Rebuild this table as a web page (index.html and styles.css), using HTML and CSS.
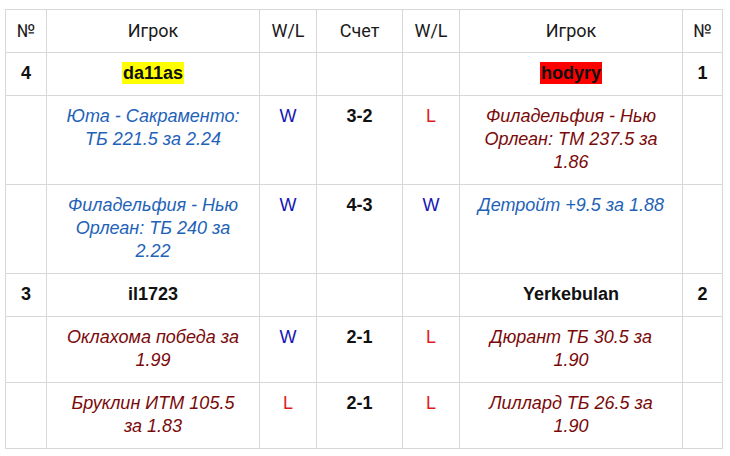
FILE: index.html
```html
<!DOCTYPE html>
<html lang="ru">
<head>
<meta charset="utf-8">
<title>Игроки</title>
<link rel="stylesheet" href="styles.css">
</head>
<body>
<table class="grid">
  <colgroup>
    <col class="c-num"><col class="c-player"><col class="c-wl"><col class="c-score"><col class="c-wl"><col class="c-player2"><col class="c-num2">
  </colgroup>
  <thead>
    <tr>
      <th>№</th><th>Игрок</th><th>W/L</th><th>Счет</th><th>W/L</th><th>Игрок</th><th>№</th>
    </tr>
  </thead>
  <tbody>
    <tr class="player-row">
      <td class="num">4</td>
      <td class="name"><span class="hl-yellow">da11as</span></td>
      <td></td><td></td><td></td>
      <td class="name"><span class="hl-red">hodyry</span></td>
      <td class="num">1</td>
    </tr>
    <tr>
      <td></td>
      <td class="bet blue">Юта - Сакраменто: ТБ 221.5 за 2.24</td>
      <td class="win">W</td>
      <td class="score">3-2</td>
      <td class="loss">L</td>
      <td class="bet red">Филадельфия - Нью Орлеан: ТМ 237.5 за 1.86</td>
      <td></td>
    </tr>
    <tr>
      <td></td>
      <td class="bet blue">Филадельфия - Нью Орлеан: ТБ 240 за 2.22</td>
      <td class="win">W</td>
      <td class="score">4-3</td>
      <td class="win">W</td>
      <td class="bet blue">Детройт +9.5 за 1.88</td>
      <td></td>
    </tr>
    <tr class="player-row">
      <td class="num">3</td>
      <td class="name">il1723</td>
      <td></td><td></td><td></td>
      <td class="name">Yerkebulan</td>
      <td class="num">2</td>
    </tr>
    <tr>
      <td></td>
      <td class="bet red">Оклахома победа за 1.99</td>
      <td class="win">W</td>
      <td class="score">2-1</td>
      <td class="loss">L</td>
      <td class="bet red">Дюрант ТБ 30.5 за 1.90</td>
      <td></td>
    </tr>
    <tr>
      <td></td>
      <td class="bet red">Бруклин ИТМ 105.5 за&nbsp;1.83</td>
      <td class="loss">L</td>
      <td class="score">2-1</td>
      <td class="loss">L</td>
      <td class="bet red">Лиллард ТБ 26.5 за 1.90</td>
      <td></td>
    </tr>
  </tbody>
</table>
</body>
</html>
```
FILE: styles.css
```css
html, body {
  margin: 0;
  padding: 0;
  background: #ffffff;
}

body {
  font-family: "Liberation Sans", Arial, sans-serif;
  font-size: 18px;
  color: #111111;
}

.grid {
  margin: 9px 0 0 5px;
  width: 718px;
  border-collapse: collapse;
  table-layout: fixed;
}

.c-num { width: 41px; }
.c-player { width: 213px; }
.c-wl { width: 57px; }
.c-score { width: 86px; }
.c-player2 { width: 223px; }
.c-num2 { width: 40px; }

.grid th,
.grid td {
  border: 1px solid #d8d8d8;
  padding: 9px 10px 10px;
  line-height: 23px;
  text-align: center;
  vertical-align: top;
}

.grid th {
  font-family: Roboto, "Liberation Sans", sans-serif;
  font-weight: 400;
  font-size: 18px;
  color: #1a1a1a;
  padding-left: 2px;
  padding-right: 2px;
}

.num,
.name,
.score {
  font-weight: 700;
  color: #111111;
}

.hl-yellow {
  background: #ffff00;
  padding: 1px 1px;
}

.hl-red {
  background: #ff0000;
  padding: 1px 1px;
}

.bet {
  font-style: italic;
}

.blue { color: #1f63b8; }
.red { color: #7a0a0a; }

.win { color: #1616b4; }
.loss { color: #e01b1b; }

.grid td.win,
.grid td.loss {
  padding-left: 2px;
  padding-right: 2px;
}
```
